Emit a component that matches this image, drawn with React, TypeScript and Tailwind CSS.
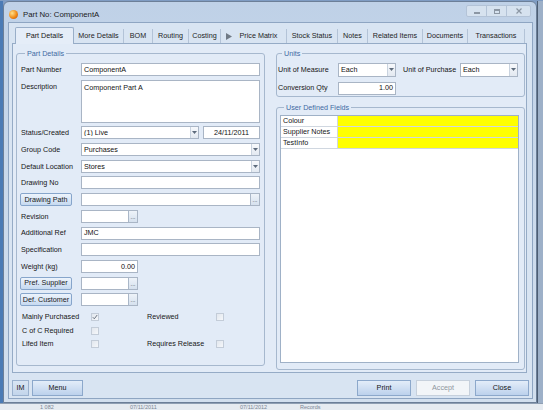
import React from "react";

type Kids = { children?: React.ReactNode; className?: string };

const fieldBase =
  "h-[13px] border border-[#a9b5c5] bg-white flex items-center text-[7.2px] leading-none text-[#111]";

function TextBox({ children, className = "" }: Kids) {
  return <div className={`${fieldBase} px-[2px] ${className}`}>{children}</div>;
}

function DropArrow() {
  return (
    <div className="h-full w-[8px] border-l border-[#c9d3df] bg-gradient-to-b from-[#f7f9fc] to-[#e3e9f1] flex items-center justify-center">
      <svg width="5" height="3" viewBox="0 0 5 3">
        <path d="M0 0h5L2.5 3z" fill="#5d6b7c" />
      </svg>
    </div>
  );
}

function Combo({ children, className = "" }: Kids) {
  return (
    <div className={`${fieldBase} ${className}`}>
      <span className="flex-1 px-[2px] truncate">{children}</span>
      <DropArrow />
    </div>
  );
}

function Ellipsis() {
  return (
    <div className="h-full w-[9px] border-l border-[#aab7c8] bg-gradient-to-b from-[#eef3f9] to-[#d6e1ee] flex items-end justify-center pb-[2px] text-[6px] leading-none text-[#333]">
      ...
    </div>
  );
}

function PickBox({ className = "", children }: Kids) {
  return (
    <div className={`${fieldBase} ${className}`}>
      <span className="flex-1 px-[2px]">{children}</span>
      <Ellipsis />
    </div>
  );
}

function FormButton({ children }: Kids) {
  return (
    <div className="-ml-[1px] mr-[9px] w-[52px] h-[13px] flex items-center justify-center rounded-[2px] border border-[#86a5cb] bg-gradient-to-b from-[#edf4fc] to-[#c6d9f0] text-[7.2px] leading-none text-[#1a1a1a]">
      {children}
    </div>
  );
}

function Row({ label, children }: { label?: string; children: React.ReactNode }) {
  return (
    <div className="flex items-start">
      {label !== undefined && <div className="w-[60px] h-[13px] flex items-center">{label}</div>}
      {children}
    </div>
  );
}

function Check({ checked = false }: { checked?: boolean }) {
  return (
    <div className="w-[8px] h-[8px] border border-[#c3ccd8] bg-gradient-to-br from-[#e2e7ee] to-[#f5f7fa] flex items-center justify-center">
      {checked && (
        <svg width="6" height="6" viewBox="0 0 6 6">
          <path d="M0.8 3.2 2.3 4.8 5.2 1" stroke="#6b7480" strokeWidth="1" fill="none" />
        </svg>
      )}
    </div>
  );
}

function Legend({ children }: Kids) {
  return (
    <legend className="ml-[4px] px-[2px] text-[7.2px] leading-[9px] text-[#3f6aa3]">{children}</legend>
  );
}

const tabs: { label: string; w: string; icon?: boolean }[] = [
  { label: "More Details", w: "w-[50px]" },
  { label: "BOM", w: "w-[29px]" },
  { label: "Routing", w: "w-[36px]" },
  { label: "Costing", w: "w-[32px]" },
  { label: "Price Matrix", w: "w-[66px]", icon: true },
  { label: "Stock Status", w: "w-[51px]" },
  { label: "Notes", w: "w-[30px]" },
  { label: "Related Items", w: "w-[55px]" },
  { label: "Documents", w: "w-[45px]" },
  { label: "Transactions", w: "w-[57px]" },
];

const udf = ["Colour", "Supplier Notes", "TestInfo"];

export default function App() {
  return (
    <div className="w-[543px] h-[410px] overflow-hidden flex flex-col bg-[#7f9cc3] [font-family:'Liberation_Sans',Arial,sans-serif] text-[7.2px] leading-none text-[#161616]">
      <div className="flex pt-[1px]">
        <div className="w-[3px] bg-[#4b7bb5]" />
        {/* window */}
        <div className="w-[534px] h-[402px] flex flex-col rounded-t-[6px] border border-[#6c7f98] bg-gradient-to-b from-[#bfd1e7] via-[#cbdaec] to-[#d2dfee]">
          {/* title bar */}
          <div className="h-[20px] flex items-start pl-[5px]">
            <div className="mt-[8px] w-[9px] h-[9px] rounded-full bg-[radial-gradient(circle_at_35%_35%,#ffe08a,#f08a16_55%,#b4470a)]" />
            <div className="mt-[9px] ml-[5px] text-[7.8px] text-[#1b1b1b]">Part No: ComponentA</div>
            <div className="ml-auto mr-[5px] mt-[3px] flex h-[12px] border border-[#b3c3d7] rounded-[2px] bg-[#d6e2ef]">
              <div className="w-[20px] flex items-center justify-center border-r border-[#b3c3d7]">
                <div className="w-[6px] h-[2px] mt-[3px] bg-[#8c97a4]" />
              </div>
              <div className="w-[20px] flex items-center justify-center border-r border-[#b3c3d7]">
                <div className="w-[6px] h-[5px] border border-[#8c97a4] border-t-2" />
              </div>
              <div className="w-[23px] flex items-center justify-center">
                <svg width="6" height="6" viewBox="0 0 6 6">
                  <path d="M0.5 0.5 5.5 5.5M5.5 0.5 0.5 5.5" stroke="#8c97a4" strokeWidth="1.2" />
                </svg>
              </div>
            </div>
          </div>
          {/* client */}
          <div className="ml-[4px] w-[525px] h-[377px] border border-[#8ea5c2] bg-[#d8e4f2] flex flex-col pt-[4px] px-[3px] pb-[2px]">
            {/* tab header */}
            <div className="h-[16px] flex items-stretch pl-[3px] relative z-10">
              <div className="w-[59px] h-[17px] -mb-[1px] flex items-center justify-center border border-b-0 border-[#99aec8] rounded-t-[2px] bg-[#e5edf8]">
                Part Details
              </div>
              {tabs.map((t) => (
                <div
                  key={t.label}
                  className={`${t.w} flex items-center justify-center mt-[2px] border-r border-[#b3c3d7] text-[#1d1d1d]`}
                >
                  {t.icon && (
                    <svg width="6" height="7" viewBox="0 0 6 7" className="mr-[8px] -ml-[4px]">
                      <path d="M0 0 6 3.5 0 7z" fill="#707a86" />
                    </svg>
                  )}
                  {t.label}
                </div>
              ))}
            </div>
            {/* tab page */}
            <div className="w-[515px] h-[330px] border border-[#95abc6] bg-[#e2ebf7] flex pt-[4.5px] pl-[3px] gap-[11px]">
              {/* left group */}
              <fieldset className="w-[249px] h-[317px] border border-[#a6b8ce] rounded-[3px] pl-[4px] pr-[3px]">
                <Legend>Part Details</Legend>
                <div className="mt-[5.5px] flex flex-col gap-[3.7px]">
                  <Row label="Part Number">
                    <TextBox className="w-[179px] bg-[#eef0f3]">ComponentA</TextBox>
                  </Row>
                  <Row label="Description">
                    <div className="w-[179px] h-[43px] border border-[#a9b5c5] bg-white px-[2px] pt-[3px]">
                      Component Part A
                    </div>
                  </Row>
                  <Row label="Status/Created">
                    <Combo className="w-[118px]">(1) Live</Combo>
                    <TextBox className="ml-[4px] w-[57px] justify-center">24/11/2011</TextBox>
                  </Row>
                  <Row label="Group Code">
                    <Combo className="w-[179px]">Purchases</Combo>
                  </Row>
                  <Row label="Default Location">
                    <Combo className="w-[179px]">Stores</Combo>
                  </Row>
                  <Row label="Drawing No">
                    <TextBox className="w-[179px]" />
                  </Row>
                  <Row>
                    <FormButton>Drawing Path</FormButton>
                    <PickBox className="w-[179px]" />
                  </Row>
                  <Row label="Revision">
                    <PickBox className="w-[57px]" />
                  </Row>
                  <Row label="Additional Ref">
                    <TextBox className="w-[179px]">JMC</TextBox>
                  </Row>
                  <Row label="Specification">
                    <TextBox className="w-[179px]" />
                  </Row>
                  <Row label="Weight (kg)">
                    <TextBox className="w-[57px] justify-end">0.00</TextBox>
                  </Row>
                  <Row>
                    <FormButton>Pref. Supplier</FormButton>
                    <PickBox className="w-[57px]" />
                  </Row>
                  <Row>
                    <FormButton>Def. Customer</FormButton>
                    <PickBox className="w-[57px]" />
                  </Row>
                </div>
                <div className="mt-[4px] ml-[1px] grid grid-cols-[69px_56px_69px_8px] auto-rows-[13.5px] items-center">
                  <span>Mainly Purchased</span>
                  <Check checked />
                  <span>Reviewed</span>
                  <Check />
                  <span>C of C Required</span>
                  <Check />
                  <span />
                  <span />
                  <span>Lifed Item</span>
                  <Check />
                  <span>Requires Release</span>
                  <Check />
                </div>
              </fieldset>
              {/* right column */}
              <div className="w-[249px] flex flex-col gap-[6px]">
                <fieldset className="h-[48px] border border-[#a6b8ce] rounded-[3px] pl-[1px]">
                  <Legend>Units</Legend>
                  <div className="mt-[5px] flex items-center h-[14px]">
                    <span className="w-[60px]">Unit of Measure</span>
                    <Combo className="w-[58px] h-[14px] bg-[#fde9d6]">Each</Combo>
                    <span className="ml-[7px] w-[57px]">Unit of Purchase</span>
                    <Combo className="w-[58px] h-[14px]">Each</Combo>
                  </div>
                  <div className="mt-[5px] flex items-center">
                    <span className="w-[60px]">Conversion Qty</span>
                    <TextBox className="w-[58px] h-[12px] justify-end">1.00</TextBox>
                  </div>
                </fieldset>
                <fieldset className="h-[267px] border border-[#a6b8ce] rounded-[3px] pl-[3px] pr-[5px]">
                  <Legend>User Defined Fields</Legend>
                  <div className="mt-[3px] h-[248px] border border-[#9fb1c7] bg-white">
                    {udf.map((u) => (
                      <div key={u} className="flex h-[11px] border-b border-[#d0d7e0]">
                        <div className="w-[57px] border-r border-[#d0d7e0] pl-[2px] flex items-center">{u}</div>
                        <div className="flex-1 bg-[#ffff00]" />
                      </div>
                    ))}
                  </div>
                </fieldset>
              </div>
            </div>
            {/* bottom buttons */}
            <div className="mt-[7px] h-[16px] flex gap-[3px]">
              <div className="w-[17px] flex items-center justify-center border border-[#9ab1ce] bg-gradient-to-b from-[#d9e5f3] to-[#c3d5eb]">
                IM
              </div>
              <div className="w-[51px] flex items-center justify-center border border-[#8ca8cb] bg-gradient-to-b from-[#e3edf9] to-[#bcd1ec]">
                Menu
              </div>
              <div className="ml-auto flex gap-[5px]">
                <div className="w-[54px] flex items-center justify-center border border-[#8ca8cb] bg-gradient-to-b from-[#e3edf9] to-[#bcd1ec]">
                  Print
                </div>
                <div className="w-[54px] flex items-center justify-center border border-[#c6d0dc] bg-[#f2f5f8] text-[#8e959e]">
                  Accept
                </div>
                <div className="w-[54px] flex items-center justify-center border border-[#8ca8cb] bg-gradient-to-b from-[#e3edf9] to-[#bcd1ec]">
                  Close
                </div>
              </div>
            </div>
          </div>
        </div>
        <div className="flex-1 border-l border-[#4d5e74] bg-[#9db0c8]" />
      </div>
      {/* window behind, bottom edge */}
      <div className="flex-1 bg-[#e6ebf1] border-t border-[#8f9fb3] flex items-center text-[#7b8593] text-[5.5px] leading-[6px] overflow-hidden">
        <span className="ml-[40px] w-[90px]">1 082</span>
        <span className="w-[80px]">07/11/2011</span>
        <span className="ml-[30px] w-[60px]">07/11/2012</span>
        <span className="w-[60px]">Records</span>
      </div>
    </div>
  );
}
